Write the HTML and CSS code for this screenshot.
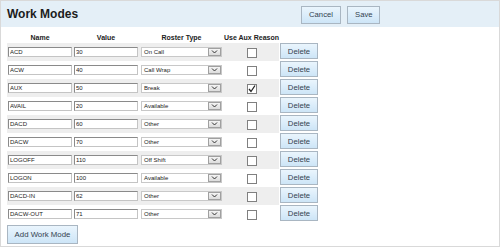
FILE: index.html
```html
<!DOCTYPE html>
<html lang="en">
<head>
  <meta charset="UTF-8" />
  <title>Work Modes</title>
  <link rel="stylesheet" href="styles.css">
</head>
<body>
  <div class="panel">
    <!-- HEADER -->
    <div class="header">
      <h1>Work Modes</h1>
      <div class="header-actions">
        <button class="btn">Cancel</button>
        <button class="btn">Save</button>
      </div>
    </div>

    <!-- MODES TABLE -->
    <table class="modes">
      <thead>
        <tr>
          <th class="col-name">Name</th>
          <th class="col-value">Value</th>
          <th class="col-type">Roster Type</th>
          <th class="col-aux">Use Aux Reason</th>
          <th class="col-del"></th>
        </tr>
      </thead>
      <tbody id="rows"></tbody>
    </table>

    <button class="btn btn-add">Add Work Mode</button>
  </div>

  <script>
    const modes = [
      ['ACD', '30', 'On Call', false],
      ['ACW', '40', 'Call Wrap', false],
      ['AUX', '50', 'Break', true],
      ['AVAIL', '20', 'Available', false],
      ['DACD', '60', 'Other', false],
      ['DACW', '70', 'Other', false],
      ['LOGOFF', '110', 'Off Shift', false],
      ['LOGON', '100', 'Available', false],
      ['DACD-IN', '62', 'Other', false],
      ['DACW-OUT', '71', 'Other', false]
    ];
    const arrow = '<svg width="7" height="4" viewBox="0 0 7 4"><path d="M1 0.5 L3.5 3 L6 0.5" fill="none" stroke="#333" stroke-width="1"/></svg>';
    const tick = '<svg width="8" height="8" viewBox="0 0 8 8"><path d="M1 4 L3 6.5 L7 0.5" fill="none" stroke="#222" stroke-width="1.3"/></svg>';
    const body = document.getElementById('rows');
    modes.forEach(m => {
      const tr = document.createElement('tr');
      tr.innerHTML =
        '<td class="col-name"><input class="field" value="' + m[0] + '"></td>' +
        '<td class="col-value"><input class="field" value="' + m[1] + '"></td>' +
        '<td class="col-type"><div class="select"><span class="select-value">' + m[2] + '</span><span class="select-arrow">' + arrow + '</span></div></td>' +
        '<td class="col-aux"><span class="check">' + (m[3] ? tick : '') + '</span></td>' +
        '<td class="col-del"><button class="btn btn-del">Delete</button></td>';
      body.appendChild(tr);
    });
  </script>
</body>
</html>
```

FILE: styles.css
```css
* {margin: 0; padding: 0; box-sizing: border-box;}
body {
  font-family: "Liberation Sans", Arial, sans-serif;
  color: #222;
  background: #fff;
}

.panel {
  width: 500px;
  height: 247px;
  border: 1px solid #d9d9d9;
}

/* Header */
.header {
  height: 26px;
  background: #e4eff7;
  display: flex;
  align-items: center;
  padding-left: 6px;
}
.header h1 {
  font-size: 12px;
  font-weight: bold;
  color: #1c1c1c;
  flex: 1;
}
.header-actions {
  display: flex;
  gap: 6px;
  margin-right: 119px;
  margin-top: 1px;
}

/* Buttons */
.btn {
  font-family: "Liberation Sans", Arial, sans-serif;
  font-size: 7.7px;
  color: #33424f;
  background: linear-gradient(180deg, #eaf5fd 0%, #cde5f7 100%);
  border: 1px solid #a9b6c2;
  height: 18px;
  padding: 0 7px;
  cursor: pointer;
}
.header .btn:first-child {width: 40px;}
.header .btn:last-child {width: 33px;}

.btn-del {
  width: 38px;
  height: 16px;
  padding: 0;
  margin: 0 0 2px 1px;
  display: block;
}
.btn-add {
  margin: 0 0 0 6px;
  width: 71px;
  height: 19px;
  padding: 0;
  font-size: 7.8px;
}

/* Table */
.modes {
  border-collapse: collapse;
  margin: 0 0 0 6px;
  table-layout: fixed;
}
.modes th {
  height: 16px;
  font-size: 7px;
  font-weight: bold;
  color: #222;
  text-align: center;
  vertical-align: bottom;
  padding-bottom: 2px;
  white-space: nowrap;
}
.modes td {
  height: 18px;
  padding: 0;
  vertical-align: middle;
}
.modes tbody tr:nth-child(odd) td {background: #eeeeee;}
.modes tbody tr td.col-del {background: transparent;}
.col-name {width: 66px;}
.col-value {width: 66px;}
.col-type {width: 85px;}
.col-aux {width: 54px; text-align: center;}
.col-del {width: 40px;}

.field {
  display: block;
  width: 64px;
  height: 10px;
  margin-left: 1px;
  border: 1px solid #8a8a8a;
  border-right-color: #c4c4c4;
  border-bottom-color: #c4c4c4;
  background: #fff;
  font-family: "Liberation Sans", Arial, sans-serif;
  font-size: 6px;
  color: #222;
  padding: 0 1px;
  outline: none;
}

.select {
  width: 81px;
  height: 10px;
  margin-left: 2px;
  background: #fff;
  border: 1px solid #c8c8c8;
  display: flex;
  align-items: center;
  justify-content: space-between;
  font-size: 6px;
  color: #222;
}
.select-value {padding-left: 2px;}
.select-arrow {
  width: 13px;
  height: 8px;
  background: linear-gradient(180deg, #f4f4f4 0%, #dcdcdc 100%);
  border: 1px solid #a0a0a0;
  display: flex;
  align-items: center;
  justify-content: center;
}

.check {
  display: inline-block;
  width: 10px;
  height: 10px;
  border: 1px solid #808080;
  background: #fff;
  vertical-align: middle;
  margin-left: 1px;
}
.check svg {display: block;}
```
